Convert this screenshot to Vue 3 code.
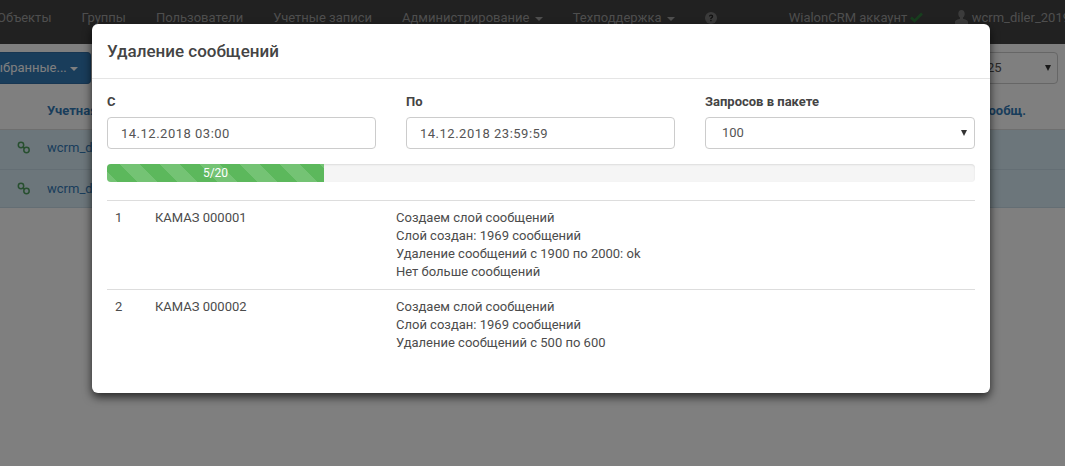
<script setup>
const navLeft = ['Объекты', 'Группы', 'Пользователи', 'Учетные записи']
const rows = [
  { n: 1, name: 'КАМАЗ 000001', log: ['Создаем слой сообщений', 'Слой создан: 1969 сообщений', 'Удаление сообщений с 1900 по 2000: ok', 'Нет больше сообщений'] },
  { n: 2, name: 'КАМАЗ 000002', log: ['Создаем слой сообщений', 'Слой создан: 1969 сообщений', 'Удаление сообщений с 500 по 600'] }
]
</script>

<template>
  <div class="page">
    <nav class="navbar">
      <a v-for="item in navLeft" :key="item" class="nav-link">{{ item }}</a>
      <a class="nav-link">Администрирование <i class="caret"></i></a>
      <a class="nav-link">Техподдержка <i class="caret"></i></a>
      <a class="nav-link help">
        <svg width="12" height="12" viewBox="0 0 12 12"><circle cx="6" cy="6" r="6" fill="#777"/><path d="M3.9 4.6C4 3.3 4.9 2.6 6.1 2.6c1.200 0 2.100.7 2.100 1.800 0 1.600-1.700 1.500-1.700 2.700H5.200c0-1.800 1.600-1.800 1.600-2.600 0-.4-.3-.7-.8-.7-.5 0-.8.3-.9.8z" fill="#222"/><rect x="5.200" y="7.800" width="1.400" height="1.500" fill="#222"/></svg>
      </a>
      <span class="spacer"></span>
      <a class="nav-link crm">WialonCRM аккаунт
        <svg width="13" height="11" viewBox="0 0 13 11"><path d="M1 5.500l3.500 3.500L12 1.500" fill="none" stroke="#2f7d3c" stroke-width="2.600"/></svg>
      </a>
      <a class="nav-link user">
        <svg width="13" height="14" viewBox="0 0 13 14"><path d="M6.500 0C8.500 0 9.700 1.600 9.700 3.700c0 1.700-.8 3.200-1.700 3.900v1.200c1.800.7 5 1.300 5 3.200v2H0v-2c0-1.900 3.200-2.500 5-3.200V7.600C4.100 6.900 3.300 5.400 3.300 3.700 3.300 1.600 4.500 0 6.500 0z" fill="#777"/></svg>
        wcrm_diler_2019
      </a>
    </nav>

    <div class="toolbar">
      <button class="btn-selected"><span>Выбранные... <i class="caret"></i></span></button>
      <span class="spacer"></span>
      <div class="page-size">25<i class="arrow"></i></div>
    </div>

    <div class="thead">
      <span class="th-account">Учетная запись</span>
      <span class="spacer"></span>
      <span>Сообщ.</span>
    </div>
    <div v-for="i in 2" :key="i" class="trow" :class="{ first: i === 1 }">
      <svg class="chain" width="14" height="14" viewBox="0 0 14 14" fill="none" stroke="#4f9f5f" stroke-width="1.500">
        <circle cx="4" cy="4" r="2.700"/>
        <circle cx="9.500" cy="9" r="2.700"/>
        <path d="M5.700 5.700l2 1.700"/>
      </svg>
      <span>wcrm_diler_2019</span>
    </div>

    <div class="backdrop"></div>

    <div class="modal">
      <header class="modal-header">
        <h4>Удаление сообщений</h4>
      </header>
      <div class="modal-body">
        <div class="fields">
          <label class="field">
            <span class="label">С</span>
            <input class="control date" value="14.12.2018 03:00" />
          </label>
          <label class="field">
            <span class="label">По</span>
            <input class="control date" value="14.12.2018 23:59:59" />
          </label>
          <label class="field">
            <span class="label">Запросов в пакете</span>
            <div class="sel-wrap">
              <select class="control sel"><option>100</option></select>
              <i class="arrow sel-arrow"></i>
            </div>
          </label>
        </div>

        <div class="progress">
          <div class="bar" :style="{ width: (5 / 20 * 100) + '%' }">5/20</div>
        </div>

        <table class="log">
          <tbody>
            <tr v-for="r in rows" :key="r.n">
              <td class="c-n">{{ r.n }}</td>
              <td class="c-name">{{ r.name }}</td>
              <td>
                <div v-for="line in r.log" :key="line">{{ line }}</div>
              </td>
            </tr>
          </tbody>
        </table>
      </div>
    </div>
  </div>
</template>

<style>
html, body { margin: 0; overflow: hidden; background: #fff; }
</style>

<style scoped>
.page {
  position: relative;
  width: 1065px;
  height: 466px;
  overflow: hidden;
  font-family: Roboto, "Liberation Sans", sans-serif;
  font-size: 13px;
  line-height: 18px;
  color: #4c4c4c;
  background: #fff;
}
.navbar {
  display: flex;
  align-items: center;
  height: 44px;
  padding-bottom: 8px;
  box-sizing: border-box;
  margin-left: -18px;
  margin-right: -20px;
  background: #424242;
}
.nav-link {
  padding: 0 15px;
  color: #9d9d9d;
  white-space: nowrap;
  font-size: 13px;
}
.help { display: flex; align-items: center; }
.crm svg { vertical-align: -1px; }
.user { padding-left: 17px; }
.user svg { vertical-align: -2px; }
.spacer { flex: 1; }
.caret {
  display: inline-block;
  width: 0;
  height: 0;
  margin-left: 0;
  vertical-align: middle;
  border-top: 4px solid;
  border-left: 4px solid transparent;
  border-right: 4px solid transparent;
}
.nav-link .caret { margin-left: 2px; }
.toolbar {
  display: flex;
  align-items: center;
  height: 32px;
  margin-top: 8px;
  padding-right: 7px;
}
.btn-selected {
  display: flex;
  align-items: center;
  justify-content: flex-end;
  height: 32px;
  width: 91px;
  padding: 0 12px 0 0;
  box-sizing: border-box;
  border: 1px solid #2e6da4;
  border-left: 0;
  border-radius: 0 4px 4px 0;
  background: #337ab7;
  color: #fff;
  font: inherit;
  white-space: nowrap;
  overflow: hidden;
}
.btn-selected span { flex: none; }
.page-size {
  display: flex;
  align-items: center;
  justify-content: space-between;
  width: 160px;
  height: 32px;
  box-sizing: border-box;
  padding: 0 6px 0 88px;
  border: 1px solid #ccc;
  border-radius: 4px;
  color: #555;
}
.arrow {
  width: 0;
  height: 0;
  border-top: 6px solid #333;
  border-left: 3px solid transparent;
  border-right: 3px solid transparent;
}
.thead {
  display: flex;
  align-items: center;
  height: 46px;
  box-sizing: border-box;
  padding: 9px 39px 0 47px;
  border-bottom: 1px solid #ddd;
  font-weight: 700;
  color: #337ab7;
}
.trow {
  display: flex;
  align-items: center;
  gap: 16px;
  height: 38px;
  box-sizing: border-box;
  padding-left: 17px;
  background: #d9edf7;
  border-bottom: 1px solid #c8dde8;
  color: #337ab7;
  white-space: nowrap;
}
.trow.first {
  height: 40px;
  padding-bottom: 3px;
}
.chain { flex: none; }
.backdrop {
  position: absolute;
  inset: 0;
  background: #000;
  opacity: 0.5;
}
.modal {
  position: absolute;
  left: 92px;
  top: 24px;
  width: 898px;
  height: 369px;
  background: #fff;
  border-radius: 6px;
  box-shadow: 0 4px 10px rgba(0, 0, 0, 0.7);
}
.modal-header {
  height: 55px;
  box-sizing: border-box;
  padding: 0 15px;
  display: flex;
  align-items: center;
  border-bottom: 1px solid #e5e5e5;
}
h4 {
  margin: 0;
  font-size: 17px;
  font-weight: 500;
  color: #444;
}
.modal-body { padding: 15px; }
.fields {
  display: grid;
  grid-template-columns: 269px 269px 1fr;
  gap: 30px;
}
.field { display: block; }
.label {
  display: block;
  height: 18px;
  margin-bottom: 5px;
  line-height: 16px;
  font-weight: 700;
  color: #444;
}
.control {
  display: block;
  width: 100%;
  height: 32px;
  box-sizing: border-box;
  border: 1px solid #ccc;
  border-radius: 4px;
  background: #fff;
  color: #555;
  font: inherit;
  outline: none;
}
.date { padding: 0 13px; letter-spacing: 0.5px; }
.sel-wrap { position: relative; }
.sel {
  padding: 0 16px;
  appearance: none;
  -webkit-appearance: none;
}
.sel-arrow {
  position: absolute;
  top: 13px;
  right: 8px;
}
.progress {
  height: 18px;
  margin-top: 15px;
  margin-bottom: 18px;
  background: #f5f5f5;
  border-radius: 4px;
  overflow: hidden;
  box-shadow: inset 0 1px 2px rgba(0, 0, 0, 0.1);
}
.bar {
  height: 100%;
  background-color: #5cb85c;
  background-image: linear-gradient(45deg,
    rgba(255,255,255,.15) 25%, transparent 25%, transparent 50%,
    rgba(255,255,255,.15) 50%, rgba(255,255,255,.15) 75%, transparent 75%, transparent);
  background-size: 40px 40px;
  background-position: 13px 0;
  color: #fff;
  font-size: 12px;
  line-height: 18px;
  text-align: center;
}
.log {
  width: 100%;
  border-collapse: collapse;
  table-layout: fixed;
}
.log td {
  padding: 8px;
  border-top: 1px solid #ddd;
  vertical-align: top;
}
.c-n { width: 24px; }
.c-name { width: 225px; }
</style>
